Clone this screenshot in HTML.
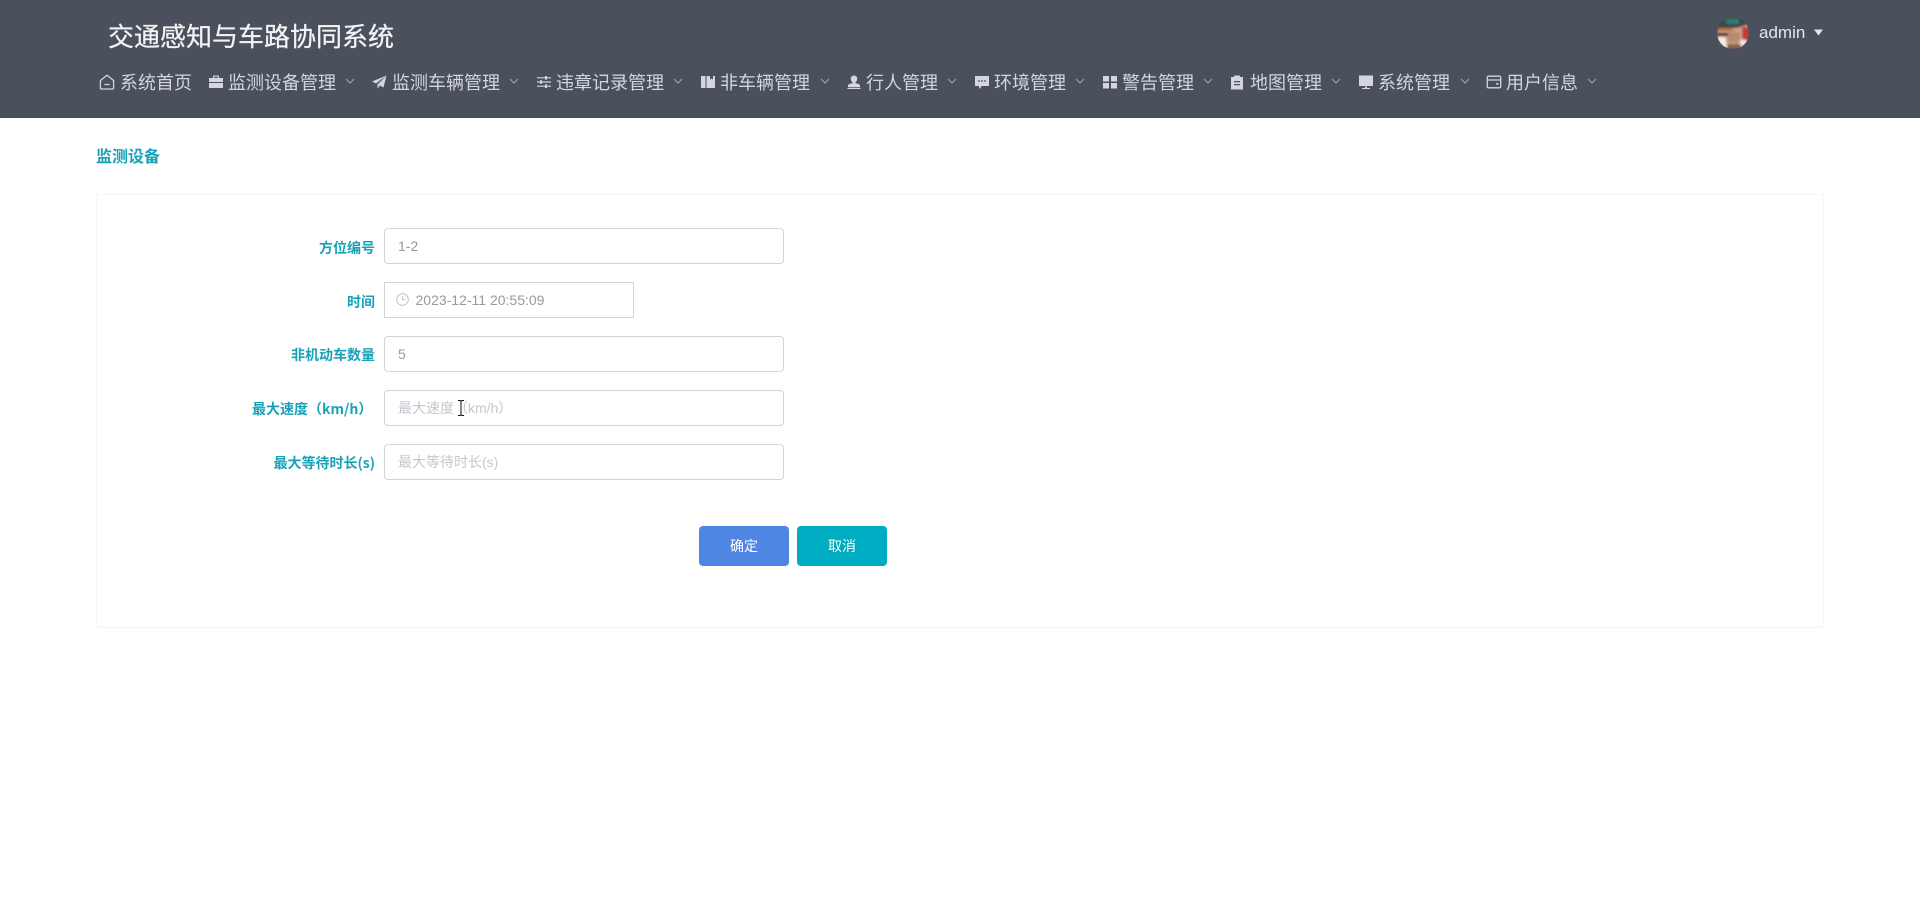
<!DOCTYPE html>
<html lang="zh-CN"><head><meta charset="utf-8"><title>监测设备</title>
<style>
html,body{margin:0;padding:0;background:#fff;width:1920px;height:924px;overflow:hidden}
body{position:relative;font-family:"Liberation Sans","Noto Sans CJK SC",sans-serif}
.a{position:absolute;white-space:nowrap}
#hd{position:absolute;left:0;top:0;width:1920px;height:118px;background:#4b505d}
.t{position:absolute;white-space:nowrap;top:69px;height:26px;line-height:26px;font-size:18px;color:#d3d6dc;font-family:"Noto Sans CJK SC",sans-serif}
svg.i{position:absolute;top:74px;width:16px;height:16px;fill:#d3d6dc}
svg.c{position:absolute;top:77px;width:10px;height:8px;fill:none;stroke:#a5a9b2;stroke-width:1}
.l{position:absolute;right:1545px;white-space:nowrap;font-size:14px;font-weight:700;color:#17a2b8;line-height:20px;font-family:"Noto Sans CJK SC",sans-serif}
.in{position:absolute;left:384px;width:398px;height:34px;border:1px solid #d2d2d7;border-radius:4px;background:#fff;font-size:14px;line-height:34px;color:#999;text-indent:13px;font-family:"Liberation Sans","Noto Sans CJK SC",sans-serif}
.ph{color:#c4c7ce}
.b{position:absolute;top:526px;width:90px;height:40px;border-radius:4px;color:#fff;font-size:14px;line-height:40px;text-align:center;font-family:"Noto Sans CJK SC",sans-serif}
</style></head><body>
<div id="hd"></div>
<div class="a" style="left:108px;top:16px;height:40px;line-height:40px;font-size:26px;color:#f2f3f5;-webkit-text-stroke:.25px #f2f3f5;font-family:'Noto Sans CJK SC',sans-serif">交通感知与车路协同系统</div>

<svg class="i" style="left:99px" viewBox="0 0 16 16"><path d="M8 1.200 14.600 6.500V14a1 1 0 0 1-1 1H2.400a1 1 0 0 1-1-1V6.500Z M5.500 10.500h5" fill="none" stroke="#d3d6dc" stroke-width="1.300"/></svg>
<div class="t" style="left:120px">系统首页</div>

<svg class="i" style="left:208px" viewBox="0 0 16 16"><path d="M5 4V2.500A1 1 0 0 1 6 1.500h4a1 1 0 0 1 1 1V4h4v4H1V4Zm1.300 0h3.400V2.800H6.300ZM1 9h14v5H1Z"/></svg>
<div class="t" style="left:228px">监测设备管理</div>
<svg class="c" style="left:345px" viewBox="0 0 10 8"><path d="M1 2 5 6 9 2"/></svg>

<svg class="i" style="left:371px" viewBox="0 0 16 16"><path d="M15.500 1.500 1 7.500l4 2L15.500 1.500ZM15.500 1.500 6.500 10.500 6.500 14.500 9 11.500 12.500 13.500Z"/></svg>
<div class="t" style="left:392px">监测车辆管理</div>
<svg class="c" style="left:509px" viewBox="0 0 10 8"><path d="M1 2 5 6 9 2"/></svg>

<svg class="i" style="left:536px" viewBox="0 0 16 16"><path d="M1 3.200h14v1.200H1ZM1 7.400h14v1.200H1ZM1 11.600h14v1.200H1Z"/><rect x="9" y="2" width="2" height="3.600"/><rect x="4" y="6.200" width="2" height="3.600"/><rect x="9" y="10.400" width="2" height="3.600"/></svg>
<div class="t" style="left:556px">违章记录管理</div>
<svg class="c" style="left:673px" viewBox="0 0 10 8"><path d="M1 2 5 6 9 2"/></svg>

<svg class="i" style="left:700px" viewBox="0 0 16 16"><path d="M1 2h4.500v12H1ZM6.500 2H10v3.500l1.500-1 1.500 1V2h2v12H6.500Z"/></svg>
<div class="t" style="left:720px">非车辆管理</div>
<svg class="c" style="left:820px" viewBox="0 0 10 8"><path d="M1 2 5 6 9 2"/></svg>

<svg class="i" style="left:846px" viewBox="0 0 16 16"><path d="M8 1.500a3.300 3.300 0 0 1 3.300 3.500c0 1.500-.9 2.500-1.800 3.300v1c1.700.3 4.500.8 4.500 2.200V13H2v-1.500c0-1.400 2.800-1.900 4.500-2.200v-1C5.600 7.500 4.700 6.500 4.700 5A3.300 3.300 0 0 1 8 1.500ZM1.500 13.800h13V15h-13Z"/></svg>
<div class="t" style="left:866px">行人管理</div>
<svg class="c" style="left:947px" viewBox="0 0 10 8"><path d="M1 2 5 6 9 2"/></svg>

<svg class="i" style="left:974px" viewBox="0 0 16 16"><path d="M1 2h14v10H8l-3 3v-3H1Z"/><circle cx="5" cy="7" r=".9" fill="#4b505d"/><circle cx="8" cy="7" r=".9" fill="#4b505d"/><circle cx="11" cy="7" r=".9" fill="#4b505d"/></svg>
<div class="t" style="left:994px">环境管理</div>
<svg class="c" style="left:1075px" viewBox="0 0 10 8"><path d="M1 2 5 6 9 2"/></svg>

<svg class="i" style="left:1102px" viewBox="0 0 16 16"><path d="M1 2h6v5.500H1ZM9 2h6v5.500H9ZM1 9h6v5.500H1ZM9 9h6v5.500H9Z"/></svg>
<div class="t" style="left:1122px">警告管理</div>
<svg class="c" style="left:1203px" viewBox="0 0 10 8"><path d="M1 2 5 6 9 2"/></svg>

<svg class="i" style="left:1229px" viewBox="0 0 16 16"><path d="M2 3h3V1.500h6V3h3v12.500H2ZM5 7v1.300h6V7ZM5 10v1.300h6V10Z"/></svg>
<div class="t" style="left:1250px">地图管理</div>
<svg class="c" style="left:1331px" viewBox="0 0 10 8"><path d="M1 2 5 6 9 2"/></svg>

<svg class="i" style="left:1358px" viewBox="0 0 16 16"><path d="M1 1.500h14v10.500H1ZM7 12.500h2v1.500h3v1H4v-1h3Z"/></svg>
<div class="t" style="left:1378px">系统管理</div>
<svg class="c" style="left:1460px" viewBox="0 0 10 8"><path d="M1 2 5 6 9 2"/></svg>

<svg class="i" style="left:1486px" viewBox="0 0 16 16"><path d="M2.500 2.200h11a1.200 1.200 0 0 1 1.200 1.200v9.200a1.200 1.200 0 0 1-1.200 1.200h-11a1.200 1.200 0 0 1-1.200-1.200V3.400a1.200 1.200 0 0 1 1.200-1.200ZM1.300 6h13.400M10 9.800h2.500" fill="none" stroke="#d3d6dc" stroke-width="1.300"/></svg>
<div class="t" style="left:1506px">用户信息</div>
<svg class="c" style="left:1587px" viewBox="0 0 10 8"><path d="M1 2 5 6 9 2"/></svg>

<svg style="position:absolute;left:1717px;top:17px;width:32px;height:32px" viewBox="0 0 32 32">
<defs><clipPath id="av"><circle cx="16" cy="16" r="16"/></clipPath><filter id="bl"><feGaussianBlur stdDeviation="1"/></filter></defs>
<g clip-path="url(#av)"><g filter="url(#bl)"><rect width="32" height="32" fill="#c9a08a"/>
<path d="M0 0h32v7L20 11 4 11 0 14Z" fill="#3a4a48"/><path d="M9 2h13v5H9Z" fill="#2f7a76"/>
<path d="M0 11h14l4 3H2l-2 2Z" fill="#c0703a"/><path d="M0 16h12v3H0Z" fill="#2a2522"/>
<path d="M0 20h8l3 12H0Z" fill="#f3e9e2"/><path d="M25 10h7v14h-7Z" fill="#c43a3a"/><path d="M24 22l8 2v8H20Z" fill="#efe3dc"/>
<path d="M11 15h12v10H11Z" fill="#b98a72"/><path d="M10 27h14v5H10Z" fill="#8d5f50"/></g></g></svg>
<div class="a" style="left:1759px;top:22px;height:22px;line-height:22px;font-size:17px;color:#e4e6ee">admin</div>
<svg style="position:absolute;left:1814px;top:29px;width:9px;height:7px" viewBox="0 0 9 7"><path d="M0 .5h9L4.500 6.500Z" fill="#e4e6ee"/></svg>

<div class="a" style="left:96px;top:143px;height:24px;line-height:24px;font-size:16px;font-weight:700;color:#17a2b8;font-family:'Noto Sans CJK SC',sans-serif">监测设备</div>

<div style="position:absolute;left:96px;top:194px;width:1726px;height:432px;border:1px solid #f4f5f6"></div>

<div class="l" style="top:238px">方位编号</div>
<div class="in" style="top:228px">1-2</div>

<div class="l" style="top:292px">时间</div>
<div style="position:absolute;left:384px;top:282px;width:248px;height:34px;border:1px solid #d2d2d7;background:#fff"></div>
<svg style="position:absolute;left:396px;top:293px;width:13px;height:13px" viewBox="0 0 13 13"><circle cx="6.500" cy="6.500" r="5.800" fill="none" stroke="#bfc2c8"/><path d="M6.500 3v3.700h3" fill="none" stroke="#bfc2c8"/></svg>
<div class="a" style="left:415.500px;top:282px;height:36px;line-height:36px;font-size:14px;color:#999">2023-12-11 20:55:09</div>

<div class="l" style="top:345px">非机动车数量</div>
<div class="in" style="top:336px">5</div>

<div class="l" style="top:399px;left:252px;right:auto">最大速度（km/h）</div>
<div class="in ph" style="top:390px">最大速度（km/h）</div>

<div class="l" style="top:453px">最大等待时长(s)</div>
<div class="in ph" style="top:444px">最大等待时长(s)</div>

<svg style="position:absolute;left:457px;top:400px;width:8px;height:16px" viewBox="0 0 8 16"><path d="M1 .5h2.200L4 1.300 4.800.5H7M1 15.500h2.200L4 14.700l.8.800H7M4 1.300v13.400" fill="none" stroke="#111" stroke-width="1"/></svg>

<div class="b" style="left:699px;background:#4f86e3">确定</div>
<div class="b" style="left:797px;background:#00acc1">取消</div>
</body></html>
